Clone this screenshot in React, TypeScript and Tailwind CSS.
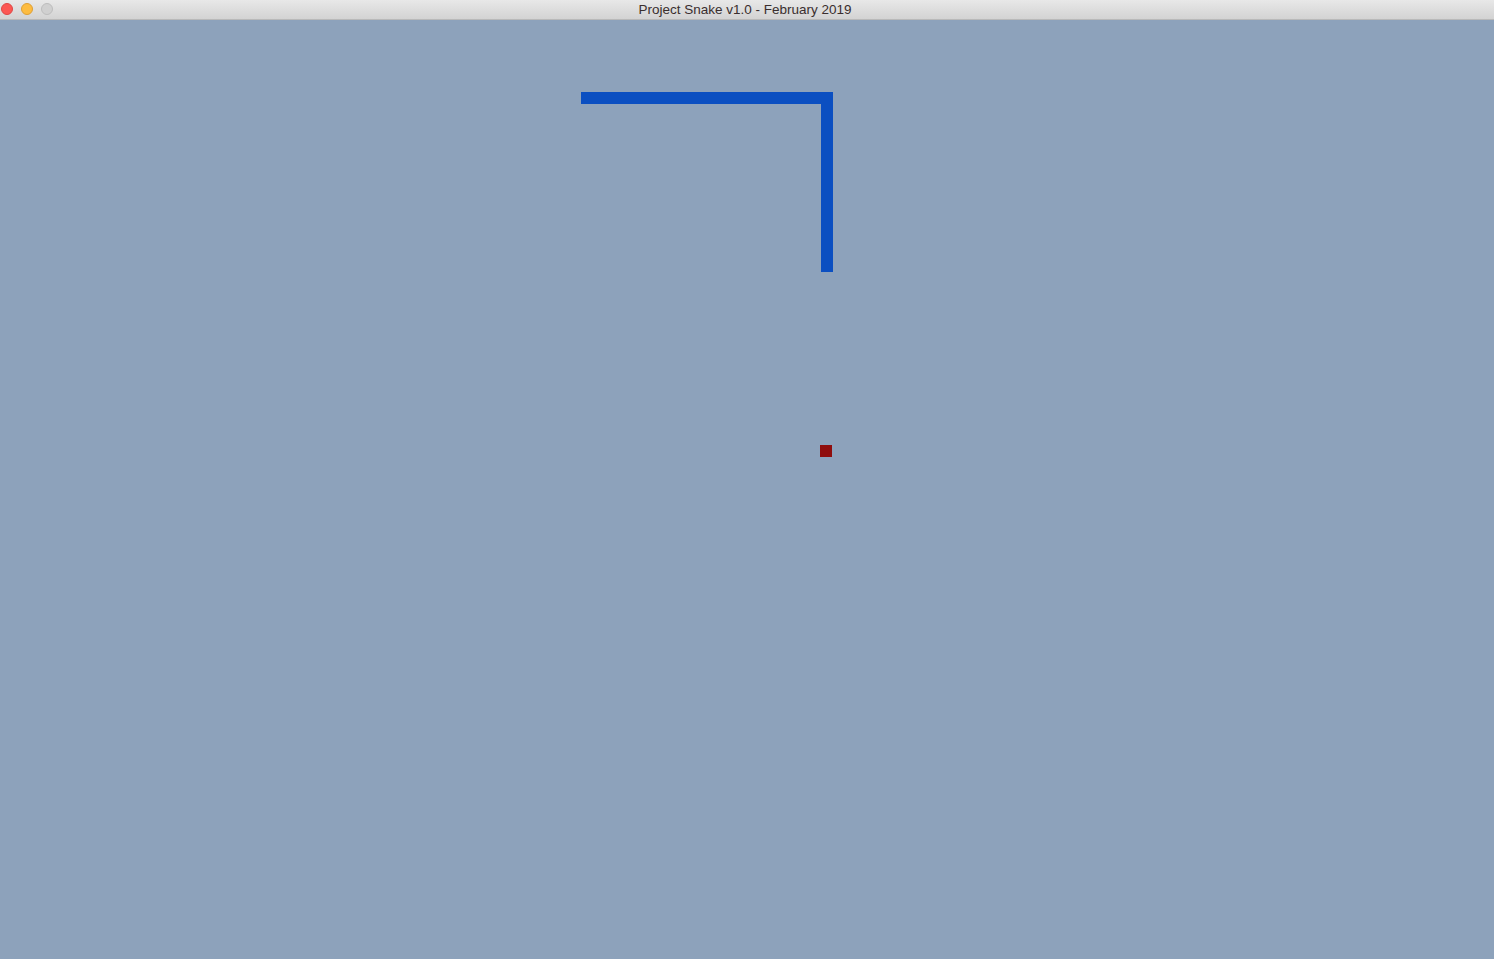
export default function App() {
    // snake segments on the board, in board pixels (board starts below the title bar)
    const segments = [
        { x: 581, y: 72, w: 252, h: 12 },
        { x: 821, y: 72, w: 12, h: 180 },
    ];
    const food = { x: 820, y: 425 };

    return (
        <div className="w-[1494px] h-[959px] flex flex-col overflow-hidden" style={{ fontFamily: '"Helvetica Neue", "Liberation Sans", Arial, sans-serif' }}>
            <div className="h-[20px] relative flex items-center justify-center bg-gradient-to-b from-[#e8e8e8] to-[#d3d3d3] border-b border-[#b9b9b9]">
                <div className="absolute left-[1px] top-[3px] flex gap-[8px]">
                    <span className="w-[12px] h-[12px] rounded-full bg-[#fc5753] border border-[#df4744]" />
                    <span className="w-[12px] h-[12px] rounded-full bg-[#fdbc40] border border-[#de9f34]" />
                    <span className="w-[12px] h-[12px] rounded-full bg-[#d0d0d0] border border-[#bdbdbd]" />
                </div>
                <span className="text-[13.5px] text-[#3a2e2e] leading-none pl-[-2px] -ml-[4px]">Project Snake v1.0 - February 2019</span>
            </div>
            <div className="flex-1 relative bg-[#8da2bb]">
                {segments.map((s, i) => (
                    <div
                        key={i}
                        className="absolute bg-[#0b4fc1]"
                        style={{ left: s.x, top: s.y, width: s.w, height: s.h }}
                    />
                ))}
                <div className="absolute w-[12px] h-[12px] bg-[#8f0d0d]" style={{ left: food.x, top: food.y }} />
            </div>
        </div>
    )
}
